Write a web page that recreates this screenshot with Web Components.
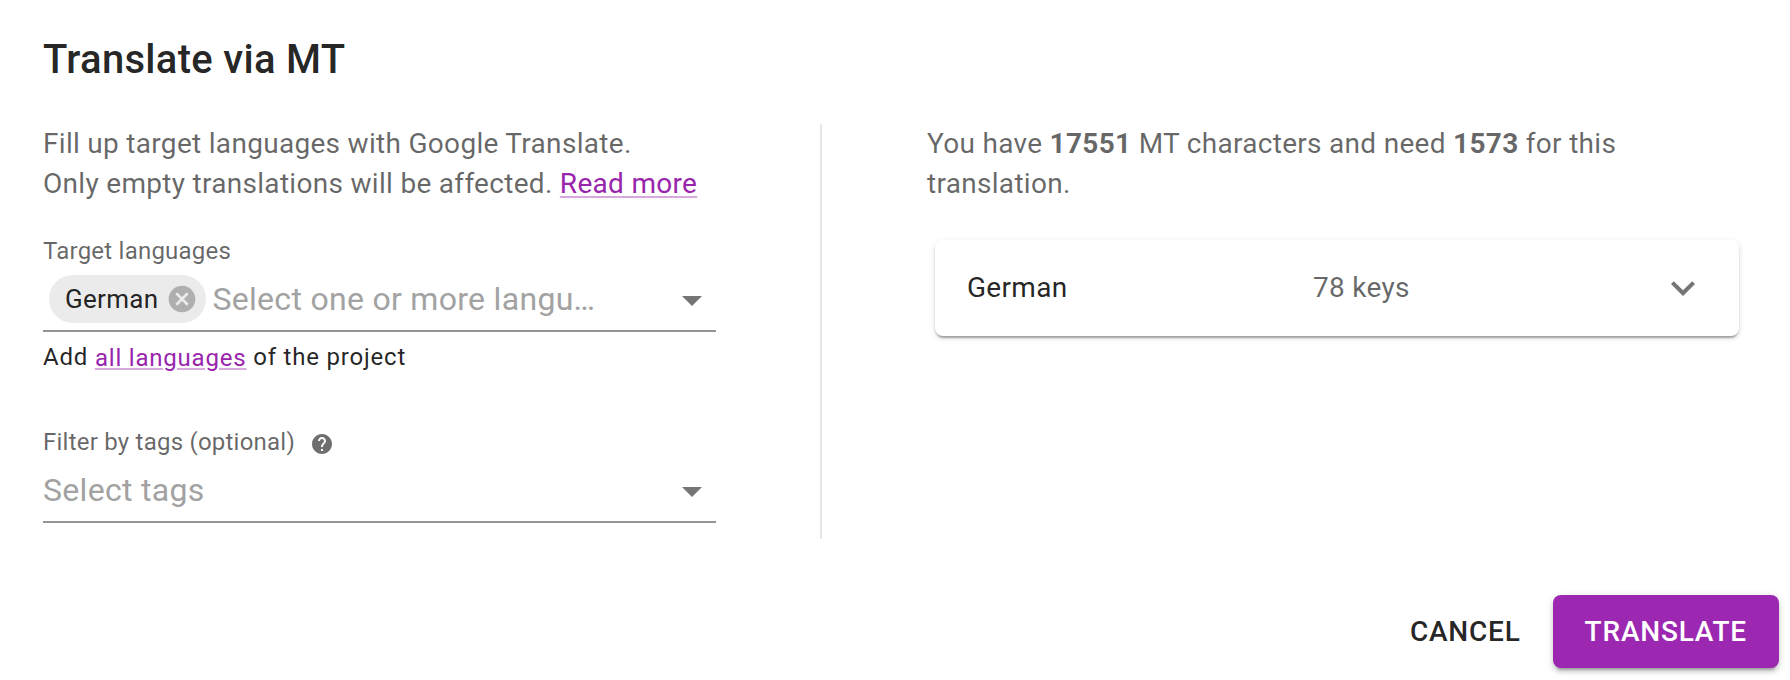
<!DOCTYPE html>
<html lang="en">
<head>
<meta charset="utf-8">
<title>Translate via MT</title>
<style>
  body { margin: 0; background: #fff; }
</style>
</head>
<body>
<mt-dialog>
  <span slot="title">Translate via MT</span>
  <mt-note slot="form">Fill up target languages with Google Translate.<br>Only empty translations will be affected. <mt-link>Read more</mt-link></mt-note>
  <mt-select slot="form" class="languages" label="Target languages" placeholder="Select one or more langu…">
    <mt-chip slot="chips">German</mt-chip>
    <span slot="helper">Add <mt-link class="small">all languages</mt-link> of the project</span>
  </mt-select>
  <mt-select slot="form" class="tags" label="Filter by tags (optional)" placeholder="Select tags" hint></mt-select>
  <mt-note slot="summary">You have <b>17551</b> MT characters and need <b>1573</b> for this<br>translation.</mt-note>
  <mt-accordion slot="summary"><span>German</span><span slot="info">78 keys</span></mt-accordion>
  <mt-button slot="actions">Cancel</mt-button>
  <mt-button slot="actions" primary>Translate</mt-button>
</mt-dialog>

<script>
function define(name, html, setup) {
  const template = document.createElement("template");
  template.innerHTML = html;
  customElements.define(name, class extends HTMLElement {
    constructor() {
      super();
      this.attachShadow({ mode: "open" });
      this.shadowRoot.appendChild(template.content.cloneNode(true));
    }

    connectedCallback() {
      if (setup) setup(this, this.shadowRoot);
    }
  });
}

define("mt-link", `
  <style>
    :host { color: #9825ac; cursor: pointer; }
    :host(.small) { vertical-align: -1px; line-height: 1; }
    a { text-decoration: underline; text-decoration-color: rgba(156, 39, 176, .4); text-decoration-thickness: 2px; text-underline-offset: 3px; }
    :host(.small) a { text-underline-offset: 2px; }
  </style>
  <a><slot></slot></a>
`);

define("mt-note", `
  <style>
    :host { display: block; font-size: 28px; line-height: 40px; letter-spacing: .3px; color: rgba(0, 0, 0, .6); }
    ::slotted(b) { font-weight: 700; }
  </style>
  <slot></slot>
`);

define("mt-chip", `
  <style>
    :host { display: flex; align-items: center; height: 48px; margin-left: 6px; margin-right: 6px; box-sizing: border-box; padding: 0 8px 0 16px; border-radius: 24px; background: #ebebeb; font-size: 26px; letter-spacing: .3px; }
    svg { width: 32px; height: 32px; margin-left: 8px; fill: #afafaf; }
  </style>
  <slot></slot>
  <svg viewBox="0 0 24 24"><path d="M12 2C6.47 2 2 6.47 2 12s4.47 10 10 10 10-4.47 10-10S17.53 2 12 2zm5 13.59L15.59 17 12 13.41 8.41 17 7 15.59 10.59 12 7 8.41 8.41 7 12 10.59 15.59 7 17 8.41 13.41 12 17 15.59z"/></svg>
`);

define("mt-select", `
  <style>
    :host { display: block; }
    .label { display: flex; align-items: center; height: 26px; padding-top: 2px; font-size: 24px; letter-spacing: .23px; color: rgba(0, 0, 0, .6); }
    .help { display: none; width: 24px; height: 24px; margin: 3px 0 0 15px; fill: #6f6f6f; }
    :host([hint]) .help { display: block; }
    .control { display: flex; align-items: center; height: 62px; padding-top: 4px; border-bottom: 2px solid #949494; }
    .placeholder { flex: 1; font-size: 32px; letter-spacing: .3px; color: #a2a2a2; white-space: nowrap; }
    .arrow { width: 48px; height: 48px; margin-top: 2px; fill: #757575; }
    .helper { font-size: 24px; line-height: 40px; letter-spacing: .8px; margin-top: 5px; }
  </style>
  <div class="label">
    <span id="label"></span>
    <svg class="help" viewBox="0 0 24 24"><path d="M12 2C6.48 2 2 6.48 2 12s4.48 10 10 10 10-4.48 10-10S17.52 2 12 2zm1 17h-2v-2h2v2zm2.07-7.75l-.9.92C13.45 12.9 13 13.5 13 15h-2v-.5c0-1.1.45-2.1 1.17-2.83l1.24-1.26c.37-.36.59-.86.59-1.41 0-1.1-.9-2-2-2s-2 .9-2 2H8c0-2.21 1.79-4 4-4s4 1.79 4 4c0 .88-.36 1.68-.93 2.25z"/></svg>
  </div>
  <div class="control">
    <slot name="chips"></slot>
    <span class="placeholder"></span>
    <svg class="arrow" viewBox="0 0 24 24"><path d="M7 10l5 5 5-5z"/></svg>
  </div>
  <div class="helper"><slot name="helper"></slot></div>
`, (host, root) => {
  root.querySelector("#label").textContent = host.getAttribute("label") ?? "";
  root.querySelector(".placeholder").textContent = host.getAttribute("placeholder") ?? "";
});

define("mt-accordion", `
  <style>
    :host { display: grid; grid-template-columns: 346px 1fr 48px; align-items: center; height: 96px; box-sizing: border-box; padding: 0 32px; border-radius: 8px; background: #fff; font-size: 28px; line-height: 40px; letter-spacing: .3px;
      box-shadow: 0 4px 2px -2px rgba(0, 0, 0, .2), 0 2px 2px rgba(0, 0, 0, .14), 0 2px 6px rgba(0, 0, 0, .12); }
    .info { color: rgba(0, 0, 0, .6); }
    svg { width: 48px; height: 48px; fill: #757575; }
  </style>
  <div><slot></slot></div>
  <div class="info"><slot name="info"></slot></div>
  <svg viewBox="0 0 24 24"><path d="M16.59 8.59L12 13.17 7.41 8.59 6 10l6 6 6-6z"/></svg>
`);

define("mt-button", `
  <style>
    :host { display: block; }
    button { display: block; height: 73px; margin: 0; padding: 0 16px; border: 0; border-radius: 8px; background: none; color: inherit; font: 500 28px/49px Roboto, sans-serif; letter-spacing: .8px; text-transform: uppercase; }
    :host([primary]) button { padding: 0 32px; background: #9c27b0; color: #fff;
      box-shadow: 0 6px 2px -4px rgba(0, 0, 0, .2), 0 4px 4px rgba(0, 0, 0, .14), 0 2px 10px rgba(0, 0, 0, .12); }
  </style>
  <button><slot></slot></button>
`);

define("mt-dialog", `
  <style>
    :host { display: flex; flex-direction: column; height: 680px; box-sizing: border-box; padding: 28px 11px 12px 43px; font-family: Roboto, sans-serif; color: rgba(0, 0, 0, .87); }
    h2 { margin: 0; font-size: 40px; font-weight: 500; line-height: 64px; letter-spacing: .3px; }
    .content { display: flex; margin-top: 32px; height: 415px; }
    .form { width: 673px; margin-right: 104px; }
    .divider { width: 2px; background: #e6e6e6; margin-right: 105px; }
    .summary { width: 820px; }
    .actions { display: flex; justify-content: flex-end; gap: 16px; margin-top: auto; }
    ::slotted(.languages) { margin-top: 32px; }
    ::slotted(.tags) { margin-top: 50px; }
    ::slotted(mt-note) { max-width: 700px; }
    ::slotted(mt-accordion) { margin: 36px 8px 0; }
  </style>
  <h2><slot name="title"></slot></h2>
  <div class="content">
    <div class="form"><slot name="form"></slot></div>
    <div class="divider"></div>
    <div class="summary"><slot name="summary"></slot></div>
  </div>
  <div class="actions"><slot name="actions"></slot></div>
`);
</script>
</body>
</html>
